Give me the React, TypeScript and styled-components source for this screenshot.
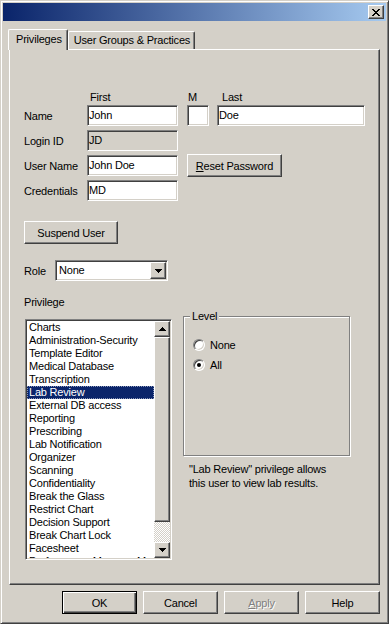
import React from 'react';
import styled, { createGlobalStyle, css } from 'styled-components';

const GlobalStyle = createGlobalStyle`
  html, body {
    margin: 0;
    padding: 0;
    background: #d4d0c8;
  }
  body {
    font-family: "Liberation Sans", Arial, sans-serif;
    font-size: 11px;
    letter-spacing: -0.2px;
    color: #000;
  }
  * {
    box-sizing: border-box;
  }
`;

const raised = css`
  border: 1px solid;
  border-color: #fff #404040 #404040 #fff;
  box-shadow: inset -1px -1px #808080;
`;

const sunken = css`
  border: 1px solid;
  border-color: #808080 #fff #fff #808080;
  box-shadow: inset 1px 1px #404040, inset -1px -1px #d4d0c8;
`;

const privileges = [
  'Charts',
  'Administration-Security',
  'Template Editor',
  'Medical Database',
  'Transcription',
  'Lab Review',
  'External DB access',
  'Reporting',
  'Prescribing',
  'Lab Notification',
  'Organizer',
  'Scanning',
  'Confidentiality',
  'Break the Glass',
  'Restrict Chart',
  'Decision Support',
  'Break Chart Lock',
  'Facesheet',
  'Performance Measure Manager',
];

function ArrowIcon({ up }: { up?: boolean }) {
  return (
    <svg width="7" height="4" viewBox="0 0 7 4" shapeRendering="crispEdges">
      {up ? (
        <path d="M3 0h1v1h1v1h1v1h1v1H0V3h1V2h1V1h1z" fill="#000" />
      ) : (
        <path d="M0 0h7v1H6v1H5v1H4v1H3V3H2V2H1V1H0z" fill="#000" />
      )}
    </svg>
  );
}

function CloseIcon() {
  return (
    <svg width="8" height="7" viewBox="0 0 8 7" shapeRendering="crispEdges">
      <path
        d="M0 0h2v1h1v1h2V1h1V0h2v1H7v1H6v1H5v1h1v1h1v1h1v1H6V6H5V5H3v1H2v1H0V6h1V5h1V4h1V3H2V2H1V1H0z"
        fill="#000"
      />
    </svg>
  );
}

export default function App() {
  return (
    <>
      <GlobalStyle />
      <Window>
        <TitleBar>
          <CloseButton>
            <CloseIcon />
          </CloseButton>
        </TitleBar>
        <Body>
          <TabStrip>
            <Tab $active>Privileges</Tab>
            <Tab>User Groups &amp; Practices</Tab>
          </TabStrip>
          <TabPanel>
            <HeaderRow>
              <HeaderLabel $w={100} $pl={3}>First</HeaderLabel>
              <HeaderLabel $w={30} $pl={1}>M</HeaderLabel>
              <HeaderLabel $w={148} $pl={5}>Last</HeaderLabel>
            </HeaderRow>
            <FieldRow $top={1}>
              <FieldLabel $w={63}>Name</FieldLabel>
              <TextBox $w={91}>John</TextBox>
              <TextBox $w={22} $ml={9}></TextBox>
              <TextBox $w={148} $ml={8}>Doe</TextBox>
            </FieldRow>
            <FieldRow $top={4}>
              <FieldLabel $w={63}>Login ID</FieldLabel>
              <TextBox $w={91} $disabled>JD</TextBox>
            </FieldRow>
            <FieldRow $top={4}>
              <FieldLabel $w={63}>User Name</FieldLabel>
              <TextBox $w={91}>John Doe</TextBox>
              <PushButton $w={95} $ml={9}>
                <u>R</u>eset Password
              </PushButton>
            </FieldRow>
            <FieldRow $top={4}>
              <FieldLabel $w={63}>Credentials</FieldLabel>
              <TextBox $w={91}>MD</TextBox>
            </FieldRow>

            <SuspendRow>
              <PushButton $w={94}>Suspend User</PushButton>
            </SuspendRow>

            <FieldRow $top={16}>
              <FieldLabel $w={31}>Role</FieldLabel>
              <Select>
                <SelectText>None</SelectText>
                <DropButton>
                  <ArrowIcon />
                </DropButton>
              </Select>
            </FieldRow>

            <LowerSection>
              <ListColumn>
                <SectionLabel>Privilege</SectionLabel>
                <ListBox>
                  <ListItems>
                    {privileges.map((p) => (
                      <ListItem key={p} $selected={p === 'Lab Review'}>
                        {p}
                      </ListItem>
                    ))}
                  </ListItems>
                  <ScrollBar>
                    <ScrollArrow>
                      <ArrowIcon up />
                    </ScrollArrow>
                    <ScrollThumb />
                    <ScrollTrack />
                    <ScrollArrow>
                      <ArrowIcon />
                    </ScrollArrow>
                  </ScrollBar>
                </ListBox>
              </ListColumn>
              <LevelColumn>
                <GroupBox>
                  <Legend>Level</Legend>
                  <RadioRow>
                    <Radio />
                    None
                  </RadioRow>
                  <RadioRow>
                    <Radio $checked />
                    All
                  </RadioRow>
                </GroupBox>
                <Description>
                  "Lab Review" privilege allows
                  <br />
                  this user to view lab results.
                </Description>
              </LevelColumn>
            </LowerSection>
          </TabPanel>
          <Footer>
            <PushButton $w={75} $default>OK</PushButton>
            <PushButton $w={75}>Cancel</PushButton>
            <PushButton $w={75} $disabled>
              <u>A</u>pply
            </PushButton>
            <PushButton $w={75}>Help</PushButton>
          </Footer>
        </Body>
      </Window>
    </>
  );
}

const Window = styled.div`
  width: 389px;
  height: 624px;
  display: flex;
  flex-direction: column;
  padding: 2px;
  background: #d4d0c8;
  border: 1px solid;
  border-color: #d4d0c8 #404040 #404040 #d4d0c8;
  box-shadow: inset 1px 1px #fff, inset -1px -1px #808080;
`;

const TitleBar = styled.div`
  height: 18px;
  flex: none;
  display: flex;
  align-items: center;
  justify-content: flex-end;
  padding-right: 2px;
  background: linear-gradient(to right, #0a246a, #a6caf0);
`;

const CloseButton = styled.div`
  width: 16px;
  height: 14px;
  display: grid;
  place-items: center;
  background: #d4d0c8;
  ${raised};
`;

const Body = styled.div`
  flex: 1;
  display: flex;
  flex-direction: column;
  padding: 8px 6px 0 6px;
`;

const TabStrip = styled.div`
  height: 20px;
  display: flex;
  align-items: flex-end;
  position: relative;
  z-index: 1;
`;

const Tab = styled.div<{ $active?: boolean }>`
  height: ${(p) => (p.$active ? 21 : 18)}px;
  margin-bottom: ${(p) => (p.$active ? -1 : 0)}px;
  margin-left: ${(p) => (p.$active ? -1 : 0)}px;
  padding: ${(p) => (p.$active ? '3px 5px 0 7px' : '2px 4px 0 5px')};
  line-height: 13px;
  white-space: nowrap;
  background: #d4d0c8;
  border-top: 1px solid #fff;
  border-left: 1px solid #fff;
  border-right: 1px solid #404040;
  border-radius: 2px 2px 0 0;
  box-shadow: inset -1px 0 #808080;
`;

const TabPanel = styled.div`
  height: 536px;
  flex: none;
  display: flex;
  flex-direction: column;
  padding: 41px 0 0 14px;
  background: #d4d0c8;
  ${raised};
`;

const HeaderRow = styled.div`
  display: flex;
  height: 13px;
  line-height: 13px;
  margin-left: 63px;
`;

const HeaderLabel = styled.div<{ $w: number; $pl: number }>`
  width: ${(p) => p.$w}px;
  padding-left: ${(p) => p.$pl}px;
`;

const FieldRow = styled.div<{ $top: number }>`
  display: flex;
  align-items: center;
  height: 21px;
  margin-top: ${(p) => p.$top}px;
`;

const FieldLabel = styled.div<{ $w: number }>`
  width: ${(p) => p.$w}px;
  flex: none;
  white-space: nowrap;
`;

const TextBox = styled.div<{ $w: number; $ml?: number; $disabled?: boolean }>`
  width: ${(p) => p.$w}px;
  height: 21px;
  margin-left: ${(p) => p.$ml ?? 0}px;
  padding: 0 1px;
  line-height: 19px;
  flex: none;
  overflow: hidden;
  white-space: nowrap;
  background: ${(p) => (p.$disabled ? '#d4d0c8' : '#fff')};
  ${sunken};
`;

const PushButton = styled.div<{
  $w: number;
  $ml?: number;
  $default?: boolean;
  $disabled?: boolean;
}>`
  width: ${(p) => p.$w}px;
  height: 23px;
  margin-left: ${(p) => p.$ml ?? 0}px;
  flex: none;
  display: flex;
  align-items: center;
  justify-content: center;
  white-space: nowrap;
  background: #d4d0c8;
  color: ${(p) => (p.$disabled ? '#808080' : '#000')};
  text-shadow: ${(p) => (p.$disabled ? '1px 1px #fff' : 'none')};
  ${(p) =>
    p.$default
      ? css`
          border: 1px solid #000;
          box-shadow: inset 1px 1px #fff, inset -1px -1px #404040, inset -2px -2px #808080;
        `
      : raised};
`;

const SuspendRow = styled.div`
  display: flex;
  margin-top: 20px;
`;

const Select = styled.div`
  width: 113px;
  height: 21px;
  display: flex;
  background: #fff;
  ${sunken};
  padding: 1px;
`;

const SelectText = styled.div`
  flex: 1;
  padding-left: 2px;
  line-height: 17px;
`;

const DropButton = styled.div`
  width: 16px;
  height: 17px;
  display: grid;
  place-items: center;
  background: #d4d0c8;
  ${raised};
`;

const LowerSection = styled.div`
  display: flex;
  gap: 11px;
  margin-top: 14px;
`;

const ListColumn = styled.div`
  width: 148px;
  display: flex;
  flex-direction: column;
`;

const SectionLabel = styled.div`
  line-height: 14px;
`;

const ListBox = styled.div`
  width: 147px;
  height: 241px;
  margin: 10px 0 0 1px;
  display: flex;
  padding: 1px;
  background: #fff;
  ${sunken};
`;

const ListItems = styled.div`
  flex: 1;
  overflow: hidden;
`;

const ListItem = styled.div<{ $selected?: boolean }>`
  height: 13px;
  line-height: 13px;
  padding-left: 2px;
  white-space: nowrap;
  background: ${(p) => (p.$selected ? '#0a246a' : 'transparent')};
  color: ${(p) => (p.$selected ? '#fff' : '#000')};
  outline: ${(p) => (p.$selected ? '1px dotted #8a96b8' : 'none')};
  outline-offset: -1px;
`;

const ScrollBar = styled.div`
  width: 16px;
  flex: none;
  display: flex;
  flex-direction: column;
`;

const ScrollArrow = styled.div`
  height: 16px;
  display: grid;
  place-items: center;
  background: #d4d0c8;
  ${raised};
`;

const ScrollThumb = styled.div`
  height: 185px;
  background: #d4d0c8;
  ${raised};
`;

const ScrollTrack = styled.div`
  flex: 1;
  background: repeating-conic-gradient(#d4d0c8 0 25%, #fff 0 50%) 0 0 / 2px 2px;
`;

const LevelColumn = styled.div`
  display: flex;
  flex-direction: column;
  padding-top: 21px;
`;

const GroupBox = styled.div`
  position: relative;
  width: 167px;
  height: 140px;
  padding: 18px 0 0 9px;
  border: 1px solid #808080;
  box-shadow: inset 1px 1px #fff, 1px 1px #fff;
`;

const Legend = styled.div`
  position: absolute;
  top: -7px;
  left: 6px;
  padding: 0 2px;
  line-height: 13px;
  background: #d4d0c8;
`;

const RadioRow = styled.div`
  display: flex;
  align-items: center;
  gap: 5px;
  height: 20px;
`;

const Radio = styled.div<{ $checked?: boolean }>`
  width: 12px;
  height: 12px;
  border-radius: 50%;
  display: grid;
  place-items: center;
  background: #fff;
  ${sunken};
  &::after {
    content: '';
    width: 4px;
    height: 4px;
    border-radius: 50%;
    background: ${(p) => (p.$checked ? '#000' : 'transparent')};
  }
`;

const Description = styled.div`
  margin: 6px 0 0 6px;
  line-height: 14px;
`;

const Footer = styled.div`
  display: flex;
  justify-content: flex-end;
  gap: 6px;
  margin-top: 6px;
`;
